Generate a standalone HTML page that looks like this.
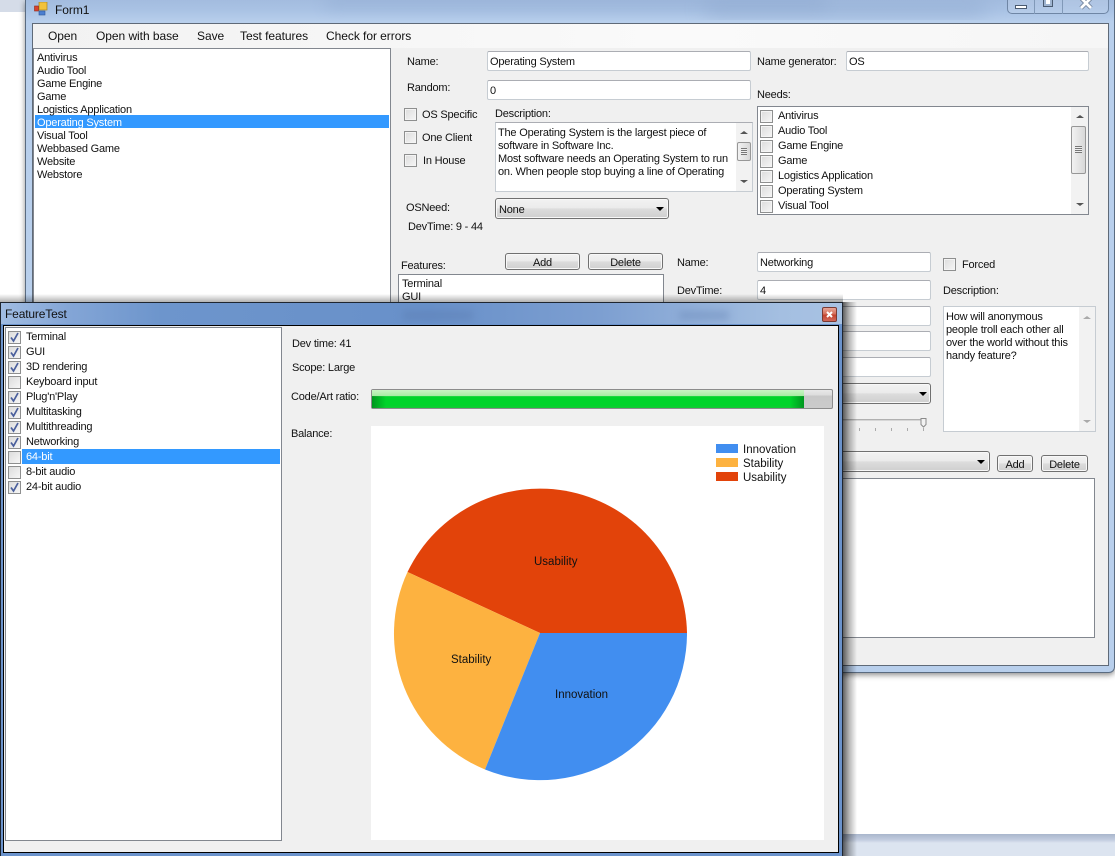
<!DOCTYPE html>
<html><head><meta charset="utf-8"><style>
html,body{margin:0;padding:0;background:#fff}
#r{position:relative;width:1115px;height:856px;overflow:hidden;background:#fff;font:11px/13px "Liberation Sans",sans-serif;letter-spacing:-.2px;color:#111}
#r div,#r span.a{position:absolute;box-sizing:border-box}
.t{white-space:nowrap;margin-top:1px}
.c{font-size:11.5px;letter-spacing:0}
.in{background:#fff;border:1px solid #c6ccd2;border-top-color:#abadb3;border-radius:2px;padding:4px 2px 2px;white-space:nowrap;line-height:13px}
.cb{width:13px;height:13px;background:linear-gradient(135deg,#dcdcdc,#f6f6f6);border:1px solid #8e8f8f;box-shadow:inset 0 0 0 1px #f4f4f4}
.btn{border:1px solid #707070;border-radius:3px;background:linear-gradient(#f2f2f2 0,#ebebeb 48%,#dddddd 50%,#cfcfcf 100%);box-shadow:inset 0 0 0 1px #f8f8f8;text-align:center;line-height:18px}
.cbo{border:1px solid #707070;border-radius:3px;background:linear-gradient(#f2f2f2 0,#ebebeb 48%,#dddddd 50%,#cfcfcf 100%);box-shadow:inset 0 0 0 1px #f8f8f8;line-height:17px;padding-left:3px}
.ar{width:0;height:0;border-left:4px solid transparent;border-right:4px solid transparent;border-top:4px solid #000}
.sb{background:#f2f2f2}
.thumb{background:linear-gradient(90deg,#f2f2f2,#d8d8d8);border:1px solid #979797;border-radius:2px}
.up{width:0;height:0;border-left:4px solid transparent;border-right:4px solid transparent;border-bottom:3px solid #555}
.dn{width:0;height:0;border-left:4px solid transparent;border-right:4px solid transparent;border-top:3px solid #555}
.ck{width:13px;height:13px;background:linear-gradient(135deg,#dcdcdc,#f6f6f6);border:1px solid #8e8f8f}
.ck svg{position:absolute;left:0;top:0}
.t.m{font-size:12px;letter-spacing:-.05px;margin-top:0}
</style></head><body><div id="r">

<!-- desktop bits -->
<div style="left:0;top:0;width:25px;height:12px;background:#d5dce8"></div>
<div style="left:843px;top:834px;width:272px;height:22px;background:linear-gradient(#a9b6cc 0,#c3cde0 6px,#dce4f0 9px)"></div>

<!-- Form1 window -->
<div style="left:25px;top:0;width:1090px;height:673px;background:linear-gradient(#a3bcdf 0,#a9c2e4 10px,#b8cfec 22px);border:1px solid #5a6b80;border-top:0;border-radius:0 0 6px 6px;box-shadow:0 2px 6px rgba(0,0,0,.45)"></div>
<div style="left:26px;top:0;width:1088px;height:20px;overflow:hidden"><div style="left:680px;top:0;width:280px;height:16px;background:#8fa9cf;filter:blur(10px);opacity:.6"></div><div style="left:300px;top:-4px;width:500px;height:12px;background:#8aa5cd;filter:blur(8px);opacity:.45"></div></div>
<div class="t m" style="left:55px;top:3px;line-height:14px">Form1</div>
<svg style="position:absolute;left:34px;top:2px" width="14" height="14"><rect x="5" y="0" width="8" height="8" fill="#f2c23c" stroke="#a98420" stroke-width=".7"/><rect x="0.500" y="4" width="4" height="5" fill="#d9412e" stroke="#8a2a1c" stroke-width=".6"/><rect x="5" y="9" width="6" height="4" fill="#4b7fd0" stroke="#2e5799" stroke-width=".6"/></svg>
<!-- caption buttons -->
<div style="left:1007px;top:-6px;width:102px;height:20px;border:1px solid #6f86a5;border-radius:0 0 5px 5px;background:rgba(255,255,255,.12)"></div>
<div style="left:1034px;top:-6px;width:1px;height:20px;background:#8199b8"></div>
<div style="left:1062px;top:-6px;width:1px;height:20px;background:#8199b8"></div>
<div style="left:1015px;top:5px;width:12px;height:4px;background:#fff;border:1px solid #4a5a70"></div>
<div style="left:1043px;top:-3px;width:10px;height:10px;background:#fff;border:1px solid #4a5a70;box-shadow:inset 0 0 0 2px #9fb4d0"></div>
<svg style="position:absolute;left:1079px;top:0" width="14" height="10"><path d="M2-2L12 8M12-2L2 8" stroke="#55667c" stroke-width="4.400" fill="none" opacity=".75"/><path d="M2-2L12 8M12-2L2 8" stroke="#fff" stroke-width="2.800"/></svg>

<!-- client -->
<div style="left:32px;top:23px;width:1077px;height:643px;background:#f0f0f0;border:1px solid #5f6a78"></div>
<div style="left:33px;top:24px;width:1075px;height:24px;background:linear-gradient(90deg,#f2f2f2,#fafafa 60%,#f6f6f6)"></div>
<div class="t m" style="left:48px;top:30px">Open</div>
<div class="t m" style="left:96px;top:30px">Open with base</div>
<div class="t m" style="left:197px;top:30px">Save</div>
<div class="t m" style="left:240px;top:30px">Test features</div>
<div class="t m" style="left:326px;top:30px">Check for errors</div>

<!-- main list -->
<div style="left:33px;top:48px;width:358px;height:260px;background:#fff;border:1px solid #82878f"></div>
<div style="left:35px;top:115px;width:354px;height:13px;background:#3399ff"></div>
<div class="t" style="left:37px;top:51px;line-height:13px">Antivirus<br>Audio Tool<br>Game Engine<br>Game<br>Logistics Application<br><span style="color:#fff">Operating System</span><br>Visual Tool<br>Webbased Game<br>Website<br>Webstore</div>

<!-- top fields -->
<div class="t" style="left:407px;top:55px">Name:</div>
<div class="in" style="left:487px;top:51px;width:264px;height:20px">Operating System</div>
<div class="t" style="left:757px;top:55px">Name generator:</div>
<div class="in" style="left:846px;top:51px;width:243px;height:20px">OS</div>
<div class="t" style="left:407px;top:81px">Random:</div>
<div class="in" style="left:487px;top:80px;width:264px;height:20px">0</div>
<div class="t" style="left:757px;top:88px">Needs:</div>

<div class="cb" style="left:404px;top:108px"></div><div class="t" style="left:422px;top:108px">OS Specific</div>
<div class="cb" style="left:404px;top:131px"></div><div class="t" style="left:422px;top:131px">One Client</div>
<div class="cb" style="left:404px;top:154px"></div><div class="t" style="left:423px;top:154px">In House</div>
<div class="t" style="left:495px;top:107px">Description:</div>

<div style="left:495px;top:122px;width:258px;height:70px;background:#fff;border:1px solid #c6ccd2;border-top-color:#abadb3"></div>
<div class="t" style="left:498px;top:126px;line-height:13px">The Operating System is the largest piece of<br>software in Software Inc.<br>Most software needs an Operating System to run<br>on. When people stop buying a line of Operating</div>
<div class="sb" style="left:736px;top:123px;width:16px;height:68px"></div>
<div class="up" style="left:740px;top:131px"></div>
<div class="thumb" style="left:737px;top:142px;width:14px;height:19px"></div>
<div style="left:741px;top:148px;width:6px;height:7px;background:repeating-linear-gradient(#777 0 1px,#eee 1px 2px)"></div>
<div class="dn" style="left:740px;top:180px"></div>

<!-- Needs -->
<div style="left:757px;top:106px;width:332px;height:109px;background:#fff;border:1px solid #82878f"></div>
<div class="cb" style="left:760px;top:110px"></div><div class="t" style="left:778px;top:109px">Antivirus</div>
<div class="cb" style="left:760px;top:125px"></div><div class="t" style="left:778px;top:124px">Audio Tool</div>
<div class="cb" style="left:760px;top:140px"></div><div class="t" style="left:778px;top:139px">Game Engine</div>
<div class="cb" style="left:760px;top:155px"></div><div class="t" style="left:778px;top:154px">Game</div>
<div class="cb" style="left:760px;top:170px"></div><div class="t" style="left:778px;top:169px">Logistics Application</div>
<div class="cb" style="left:760px;top:185px"></div><div class="t" style="left:778px;top:184px">Operating System</div>
<div class="cb" style="left:760px;top:200px"></div><div class="t" style="left:778px;top:199px">Visual Tool</div>
<div class="sb" style="left:1071px;top:107px;width:17px;height:107px"></div>
<div class="up" style="left:1076px;top:115px"></div>
<div class="thumb" style="left:1071px;top:126px;width:15px;height:48px"></div>
<div style="left:1075px;top:146px;width:7px;height:7px;background:repeating-linear-gradient(#777 0 1px,#eee 1px 2px)"></div>
<div class="dn" style="left:1076px;top:203px"></div>

<div class="t" style="left:406px;top:201px">OSNeed:</div>
<div class="cbo" style="left:495px;top:198px;width:174px;height:21px;padding-top:3px">None</div>
<div class="ar" style="left:656px;top:207px"></div>
<div class="t" style="left:408px;top:220px">DevTime: 9 - 44</div>

<!-- Features -->
<div class="t" style="left:401px;top:259px">Features:</div>
<div class="btn" style="left:505px;top:253px;width:75px;height:17px">Add</div>
<div class="btn" style="left:588px;top:253px;width:75px;height:17px">Delete</div>
<div style="left:398px;top:274px;width:266px;height:40px;background:#fff;border:1px solid #82878f"></div>
<div class="t" style="left:402px;top:277px;line-height:13px">Terminal<br>GUI</div>

<div class="t" style="left:677px;top:256px">Name:</div>
<div class="in" style="left:757px;top:252px;width:174px;height:20px">Networking</div>
<div class="t" style="left:677px;top:284px">DevTime:</div>
<div class="in" style="left:757px;top:280px;width:174px;height:20px">4</div>
<div class="in" style="left:757px;top:306px;width:174px;height:20px"></div>
<div class="in" style="left:757px;top:331px;width:174px;height:20px"></div>
<div class="in" style="left:757px;top:357px;width:174px;height:20px"></div>
<div class="cbo" style="left:757px;top:383px;width:174px;height:21px"></div>
<div class="ar" style="left:919px;top:392px"></div>
<div style="left:800px;top:419px;width:126px;height:2px;background:#d6d6d6;border-top:1px solid #b0b0b0"></div>
<svg style="position:absolute;left:850px;top:416px" width="80" height="16"><path d="M9.500 12v3M25.500 12v3M41.500 12v3M57.500 12v3M73.500 12v3" stroke="#aaa"/><path d="M71 2.500h5v6l-2.500 2.500-2.500-2.500z" fill="#f2f2f2" stroke="#8a8a8a"/></svg>

<div class="cb" style="left:943px;top:258px"></div><div class="t" style="left:962px;top:258px">Forced</div>
<div class="t" style="left:943px;top:284px">Description:</div>
<div style="left:943px;top:306px;width:153px;height:126px;background:#fff;border:1px solid #c6ccd2"></div>
<div class="t" style="left:946px;top:310px;line-height:13px">How will anonymous<br>people troll each other all<br>over the world without this<br>handy feature?</div>
<div class="sb" style="left:1079px;top:307px;width:16px;height:124px"></div>
<div class="up" style="left:1083px;top:316px;border-bottom-color:#aaa"></div>
<div class="dn" style="left:1083px;top:420px;border-top-color:#aaa"></div>

<div class="cbo" style="left:840px;top:451px;width:150px;height:21px"></div>
<div class="ar" style="left:977px;top:460px"></div>
<div class="btn" style="left:997px;top:455px;width:36px;height:17px">Add</div>
<div class="btn" style="left:1041px;top:455px;width:47px;height:17px">Delete</div>
<div style="left:840px;top:478px;width:255px;height:160px;background:#fff;border:1px solid #82878f"></div>

<!-- FeatureTest window -->
<div style="left:843px;top:302px;width:14px;height:554px;background:linear-gradient(90deg,rgba(0,0,0,.62),rgba(0,0,0,.28) 45%,rgba(0,0,0,0))"></div>
<div style="left:0;top:294px;width:843px;height:8px;background:linear-gradient(rgba(0,0,0,0),rgba(0,0,0,.3))"></div>
<div style="left:0;top:302px;width:843px;height:554px;background:#6b93cc;border:1px solid #1f2630;border-bottom:0"></div>
<div style="left:1px;top:303px;width:841px;height:21px;background:linear-gradient(90deg,#a0bce2 0,#83a5d6 70px,#6d95cc 160px,#6890c9 430px,#7d9fd1 600px,#a4bfe1 780px,#a8c2e3 841px);overflow:hidden"><div style="left:402px;top:8px;width:70px;height:9px;background:#5a79ad;filter:blur(4px);opacity:.4"></div><div style="left:678px;top:8px;width:50px;height:9px;background:#6d8bbb;filter:blur(4px);opacity:.5"></div></div>
<div class="t m" style="left:5px;top:307px;line-height:14px;letter-spacing:-.15px">FeatureTest</div>
<div style="left:822px;top:307px;width:15px;height:15px;border:1px solid #7a3a33;border-radius:2px;background:linear-gradient(#e8a698 0,#d5705c 45%,#c4432f 55%,#d0685a 100%)"></div>
<svg style="position:absolute;left:825px;top:310px" width="9" height="9"><path d="M2 2L7 7M7 2L2 7" stroke="#fff" stroke-width="2"/></svg>

<div style="left:3px;top:325px;width:836px;height:528px;background:#f0f0f0;border:1px solid #000"></div>

<!-- checked list -->
<div style="left:5px;top:327px;width:277px;height:514px;background:#fff;border:1px solid #82878f"></div>
<div style="left:22px;top:449px;width:258px;height:15px;background:#3399ff"></div>
<div class="ck" style="left:8px;top:331px"><svg width="11" height="11"><path d="M2 5.500L4.500 9L9 1" fill="none" stroke="#4a5f9c" stroke-width="1.700"/></svg></div>
<div class="ck" style="left:8px;top:346px"><svg width="11" height="11"><path d="M2 5.500L4.500 9L9 1" fill="none" stroke="#4a5f9c" stroke-width="1.700"/></svg></div>
<div class="ck" style="left:8px;top:361px"><svg width="11" height="11"><path d="M2 5.500L4.500 9L9 1" fill="none" stroke="#4a5f9c" stroke-width="1.700"/></svg></div>
<div class="ck" style="left:8px;top:376px"></div>
<div class="ck" style="left:8px;top:391px"><svg width="11" height="11"><path d="M2 5.500L4.500 9L9 1" fill="none" stroke="#4a5f9c" stroke-width="1.700"/></svg></div>
<div class="ck" style="left:8px;top:406px"><svg width="11" height="11"><path d="M2 5.500L4.500 9L9 1" fill="none" stroke="#4a5f9c" stroke-width="1.700"/></svg></div>
<div class="ck" style="left:8px;top:421px"><svg width="11" height="11"><path d="M2 5.500L4.500 9L9 1" fill="none" stroke="#4a5f9c" stroke-width="1.700"/></svg></div>
<div class="ck" style="left:8px;top:436px"><svg width="11" height="11"><path d="M2 5.500L4.500 9L9 1" fill="none" stroke="#4a5f9c" stroke-width="1.700"/></svg></div>
<div class="ck" style="left:8px;top:451px"></div>
<div class="ck" style="left:8px;top:466px"></div>
<div class="ck" style="left:8px;top:481px"><svg width="11" height="11"><path d="M2 5.500L4.500 9L9 1" fill="none" stroke="#4a5f9c" stroke-width="1.700"/></svg></div>
<div class="t" style="left:26px;top:330px">Terminal</div>
<div class="t" style="left:26px;top:345px">GUI</div>
<div class="t" style="left:26px;top:360px">3D rendering</div>
<div class="t" style="left:26px;top:375px">Keyboard input</div>
<div class="t" style="left:26px;top:390px">Plug'n'Play</div>
<div class="t" style="left:26px;top:405px">Multitasking</div>
<div class="t" style="left:26px;top:420px">Multithreading</div>
<div class="t" style="left:26px;top:435px">Networking</div>
<div class="t" style="left:26px;top:450px;color:#fff">64-bit</div>
<div class="t" style="left:26px;top:465px">8-bit audio</div>
<div class="t" style="left:26px;top:480px">24-bit audio</div>

<div class="t" style="left:292px;top:337px">Dev time: 41</div>
<div class="t" style="left:292px;top:361px">Scope: Large</div>
<div class="t" style="left:291px;top:390px">Code/Art ratio:</div>
<div class="t" style="left:291px;top:427px">Balance:</div>

<!-- progress -->
<div style="left:371px;top:389px;width:462px;height:20px;background:linear-gradient(#e8e8e8 0,#dcdcdc 30%,#c8c8c8 32%,#cbcbcb 100%);border:1px solid #8c8c8c;border-radius:2px"></div>
<div style="left:372px;top:390px;width:432px;height:18px;background:linear-gradient(#c9f5c4 0,#a8eca4 32%,#00d42a 36%,#00d42a 85%,#14c935 100%)"></div>
<div style="left:372px;top:396px;width:14px;height:12px;background:linear-gradient(90deg,rgba(0,90,20,.5),rgba(0,90,20,0))"></div>
<div style="left:790px;top:396px;width:14px;height:12px;background:linear-gradient(270deg,rgba(0,90,20,.5),rgba(0,90,20,0))"></div>

<!-- chart -->
<div style="left:371px;top:426px;width:453px;height:414px;background:#fff"></div>
<svg style="position:absolute;left:371px;top:426px" width="453" height="414" viewBox="371 426 453 414">
<path d="M540 633L687 633A147 147 0 0 0 407.500 572Z" fill="#e2430a"/>
<path d="M540 633L407.500 572A147 147 0 0 0 485 769.500Z" fill="#fdb240"/>
<path d="M540 633L485 769.500A147 147 0 0 0 687 633Z" fill="#418ef0"/>
<rect x="716" y="444" width="22" height="9" fill="#418ef0"/>
<rect x="716" y="458" width="22" height="9" fill="#fdb240"/>
<rect x="716" y="472" width="22" height="9" fill="#e2430a"/>
</svg>
<div class="t c" style="left:743px;top:443px">Innovation</div>
<div class="t c" style="left:743px;top:457px">Stability</div>
<div class="t c" style="left:743px;top:471px">Usability</div>
<div class="t c" style="left:534px;top:555px">Usability</div>
<div class="t c" style="left:451px;top:653px">Stability</div>
<div class="t c" style="left:555px;top:688px">Innovation</div>

</div></body></html>
